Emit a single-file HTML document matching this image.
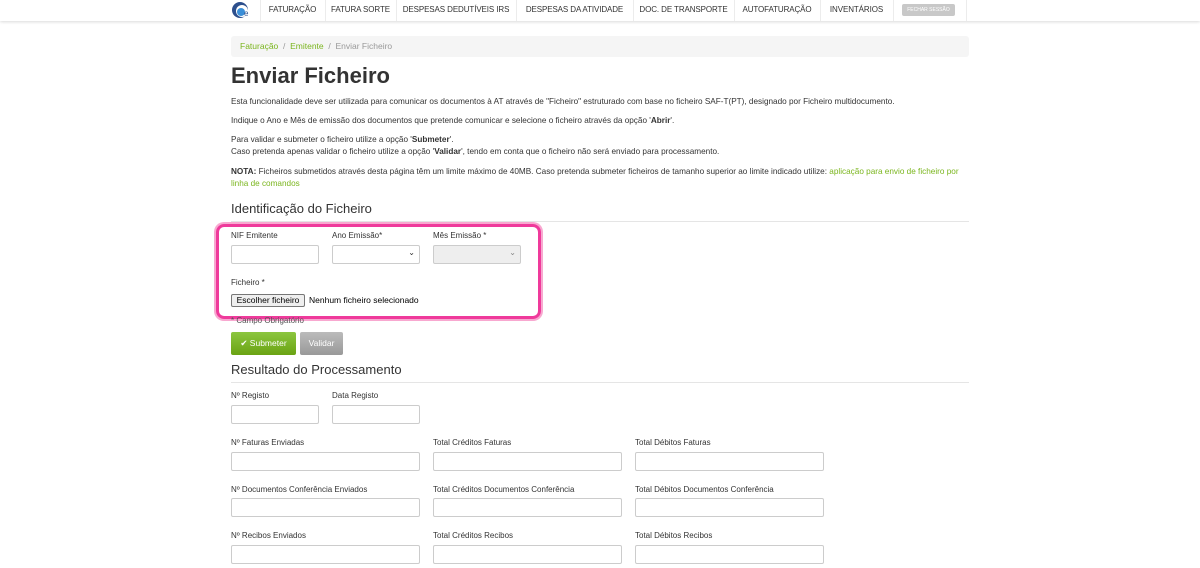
<!DOCTYPE html>
<html><head><meta charset="utf-8"><style>
*{box-sizing:border-box;margin:0;padding:0}
body{width:1200px;height:568px;overflow:hidden;background:#fff;font-family:"Liberation Sans",sans-serif;color:#333;position:relative}
.nav{position:absolute;left:0;top:0;width:1200px;height:21px;background:#fff;box-shadow:0 1px 3px rgba(0,0,0,.15)}
.nav .it{position:absolute;top:0;height:21px;line-height:19px;font-size:8px;color:#333;text-align:center;letter-spacing:-.1px}
.sep{position:absolute;top:0;width:1px;height:21px;background:#ececec}
.abs{position:absolute}
.inp{position:absolute;height:19px;border:1px solid #ccc;border-radius:2px;background:#fff}
.lbl{position:absolute;font-size:8px;color:#333}
h1{position:absolute;left:231px;top:63px;font-size:22px;font-weight:bold;color:#333}
h2{position:absolute;font-size:13px;font-weight:normal;color:#333}
.p{position:absolute;left:231px;font-size:8.2px;color:#333;line-height:12px;width:738px}
a{color:#7ab51d;text-decoration:none}
</style></head><body>
<div class="nav">
<svg class="abs" style="left:231px;top:1px" width="20" height="18"><circle cx="9" cy="9" r="8" fill="#2d4f8c"/><circle cx="11" cy="10" r="6" fill="#fff"/><circle cx="10" cy="11" r="4" fill="#3b8fd8"/><text x="13" y="15" font-size="8" fill="#2d4f8c" font-family="Liberation Sans">e</text></svg>
<div class="sep" style="left:260px"></div>
<div class="it" style="left:260px;width:65px">FATURAÇÃO</div><div class="sep" style="left:325px"></div>
<div class="it" style="left:325px;width:71px">FATURA SORTE</div><div class="sep" style="left:396px"></div>
<div class="it" style="left:396px;width:120px">DESPESAS DEDUTÍVEIS IRS</div><div class="sep" style="left:516px"></div>
<div class="it" style="left:516px;width:117px">DESPESAS DA ATIVIDADE</div><div class="sep" style="left:633px"></div>
<div class="it" style="left:633px;width:101px">DOC. DE TRANSPORTE</div><div class="sep" style="left:734px"></div>
<div class="it" style="left:734px;width:86px">AUTOFATURAÇÃO</div><div class="sep" style="left:820px"></div>
<div class="it" style="left:820px;width:73px">INVENTÁRIOS</div><div class="sep" style="left:893px"></div>
<div class="abs" style="left:902px;top:4px;width:53px;height:12px;background:#c8c8c8;border-radius:2px;font-size:5px;color:#fff;text-align:center;line-height:12px">FECHAR SESSÃO</div>
<div class="sep" style="left:966px"></div>
</div>
<div class="abs" style="left:231px;top:36px;width:738px;height:21px;background:#f5f5f5;border-radius:3px;font-size:8.5px;line-height:21px;padding-left:9px;color:#999"><a>Faturação</a> &nbsp;/&nbsp; <a>Emitente</a> &nbsp;/&nbsp; Enviar Ficheiro</div>
<h1>Enviar Ficheiro</h1>
<div class="p" style="top:96px">Esta funcionalidade deve ser utilizada para comunicar os documentos à AT através de "Ficheiro" estruturado com base no ficheiro SAF-T(PT), designado por Ficheiro multidocumento.</div>
<div class="p" style="top:115px">Indique o Ano e Mês de emissão dos documentos que pretende comunicar e selecione o ficheiro através da opção '<b>Abrir</b>'.</div>
<div class="p" style="top:134px">Para validar e submeter o ficheiro utilize a opção '<b>Submeter</b>'.<br>Caso pretenda apenas validar o ficheiro utilize a opção '<b>Validar</b>', tendo em conta que o ficheiro não será enviado para processamento.</div>
<div class="p" style="top:166px"><b>NOTA:</b> Ficheiros submetidos através desta página têm um limite máximo de 40MB. Caso pretenda submeter ficheiros de tamanho superior ao limite indicado utilize: <a>aplicação para envio de ficheiro por<br>linha de comandos</a></div>
<h2 style="left:231px;top:201px">Identificação do Ficheiro</h2>
<div class="abs" style="left:231px;top:221px;width:738px;height:1px;background:#e5e5e5"></div>
<div class="abs" style="left:216px;top:224px;width:325px;height:95px;border:3px solid #ef3a9b;border-radius:8px;box-shadow:0 0 0 2px #f8a8d0"></div>
<div class="lbl" style="left:231px;top:231px">NIF Emitente</div>
<div class="lbl" style="left:332px;top:231px">Ano Emissão*</div>
<div class="lbl" style="left:433px;top:231px">Mês Emissão *</div>
<div class="inp" style="left:231px;top:245px;width:88px"></div>
<div class="inp" style="left:332px;top:245px;width:88px"><span style="position:absolute;right:4px;top:2px;font-size:8px">⌄</span></div>
<div class="inp" style="left:433px;top:245px;width:88px;background:#eee"><span style="position:absolute;right:4px;top:2px;font-size:8px;color:#888">⌄</span></div>
<div class="lbl" style="left:231px;top:278px">Ficheiro *</div>
<div class="abs" style="left:231px;top:294px;width:74px;height:13px;border:1px solid #777;background:#efefef;border-radius:2px;font-size:8.5px;line-height:11px;text-align:center;color:#000">Escolher ficheiro</div>
<div class="abs" style="left:309px;top:295px;font-size:8.5px;color:#000">Nenhum ficheiro selecionado</div>
<div class="lbl" style="left:231px;top:316px;color:#555">* Campo Obrigatório</div>
<div class="abs" style="left:231px;top:332px;width:65px;height:23px;background:linear-gradient(#8cc63f,#6aa313);border-radius:2px;color:#fff;font-size:8.5px;line-height:23px;text-align:center">✔ Submeter</div>
<div class="abs" style="left:300px;top:332px;width:43px;height:23px;background:linear-gradient(#bbb,#999);border-radius:2px;color:#fff;font-size:8.5px;line-height:23px;text-align:center">Validar</div>
<h2 style="left:231px;top:362px">Resultado do Processamento</h2>
<div class="abs" style="left:231px;top:382px;width:738px;height:1px;background:#e5e5e5"></div>
<div class="lbl" style="left:231px;top:391px">Nº Registo</div>
<div class="lbl" style="left:332px;top:391px">Data Registo</div>
<div class="inp" style="left:231px;top:405px;width:88px"></div>
<div class="inp" style="left:332px;top:405px;width:88px"></div>
<div class="lbl" style="left:231px;top:438px">Nº Faturas Enviadas</div>
<div class="lbl" style="left:433px;top:438px">Total Créditos Faturas</div>
<div class="lbl" style="left:635px;top:438px">Total Débitos Faturas</div>
<div class="inp" style="left:231px;top:452px;width:189px"></div>
<div class="inp" style="left:433px;top:452px;width:189px"></div>
<div class="inp" style="left:635px;top:452px;width:189px"></div>
<div class="lbl" style="left:231px;top:485px">Nº Documentos Conferência Enviados</div>
<div class="lbl" style="left:433px;top:485px">Total Créditos Documentos Conferência</div>
<div class="lbl" style="left:635px;top:485px">Total Débitos Documentos Conferência</div>
<div class="inp" style="left:231px;top:498px;width:189px"></div>
<div class="inp" style="left:433px;top:498px;width:189px"></div>
<div class="inp" style="left:635px;top:498px;width:189px"></div>
<div class="lbl" style="left:231px;top:531px">Nº Recibos Enviados</div>
<div class="lbl" style="left:433px;top:531px">Total Créditos Recibos</div>
<div class="lbl" style="left:635px;top:531px">Total Débitos Recibos</div>
<div class="inp" style="left:231px;top:545px;width:189px"></div>
<div class="inp" style="left:433px;top:545px;width:189px"></div>
<div class="inp" style="left:635px;top:545px;width:189px"></div>
</body></html>
